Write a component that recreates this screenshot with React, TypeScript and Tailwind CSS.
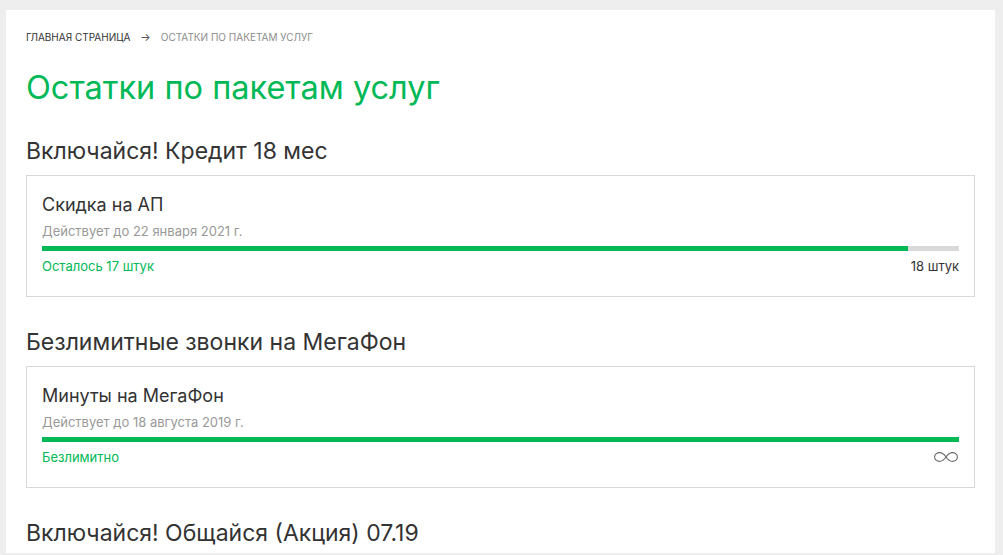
import React from "react";

const font = { fontFamily: "Inter, 'Noto Sans', sans-serif" };

function Infinity() {
  return (
    <svg width="24" height="10" viewBox="0 0 24 10" fill="none" stroke="#6b6b6b" strokeWidth="1.1">
      <path d="M12 5 C9.5 1.2 7.5 0.6 5.5 0.6 C2.8 0.6 0.6 2.6 0.6 5 C0.6 7.4 2.8 9.4 5.5 9.4 C7.5 9.4 9.5 8.8 12 5 C14.5 1.2 16.5 0.6 18.5 0.6 C21.2 0.6 23.4 2.6 23.4 5 C23.4 7.4 21.2 9.4 18.5 9.4 C16.5 9.4 14.5 8.8 12 5 Z" />
    </svg>
  );
}

type Pack = {
  section: string;
  title: string;
  date: string;
  left: string;
  right?: string;
  infinite?: boolean;
  pct: number;
};

const packs: Pack[] = [
  {
    section: "Включайся! Кредит 18 мес",
    title: "Скидка на АП",
    date: "Действует до 22 января 2021 г.",
    left: "Осталось 17 штук",
    right: "18 штук",
    pct: (17 / 18) * 100,
  },
  {
    section: "Безлимитные звонки на МегаФон",
    title: "Минуты на МегаФон",
    date: "Действует до 18 августа 2019 г.",
    left: "Безлимитно",
    infinite: true,
    pct: 100,
  },
];

export default function App() {
  return (
    <div className="bg-[#eeeeee] h-[555px] overflow-hidden pt-[10px] pl-[6px] pr-[8px]" style={font}>
      <div className="bg-white h-[543px] overflow-hidden px-5 pt-[21px]">
        <div className="flex items-center text-[10px] leading-[12px] uppercase">
          <span className="text-[#333333]">Главная страница</span>
          <span className="text-[#555555] mx-[10px] text-[11px]">→</span>
          <span className="text-[#8c8c8c]">Остатки по пакетам услуг</span>
        </div>
        <h1 className="mt-[25px] text-[32.5px] leading-[40px] text-[#00b956] font-normal">
          Остатки по пакетам услуг
        </h1>
        {packs.map((p, i) => (
          <div key={i} className={i === 0 ? "mt-[29px]" : "mt-[31px]"}>
            <h2 className="text-[23px] leading-[28px] text-[#333333] font-normal">{p.section}</h2>
            <div className="mt-[10px] border border-[#d9d9d9] pl-[15px] pr-[15px] pt-[17px] pb-[22px]">
              <div className="text-[18px] leading-[24px] text-[#333333]">{p.title}</div>
              <div className="mt-[6px] text-[13px] leading-[16px] text-[#999999]">{p.date}</div>
              <div className="mt-[7px] h-[5px] bg-[#d9d9d9]">
                <div className="h-full bg-[#00b956]" style={{ width: `${p.pct}%` }} />
              </div>
              <div className="mt-[7px] flex items-center justify-between text-[13px] leading-[16px]">
                <span className="text-[#00b956]">{p.left}</span>
                {p.infinite ? (
                  <span className="mr-[1px]"><Infinity /></span>
                ) : (
                  <span className="text-[#333333]">{p.right}</span>
                )}
              </div>
            </div>
          </div>
        ))}
        <h2 className="mt-[31px] text-[23px] leading-[28px] text-[#333333] font-normal">
          Включайся! Общайся (Акция) 07.19
        </h2>
      </div>
    </div>
  );
}
